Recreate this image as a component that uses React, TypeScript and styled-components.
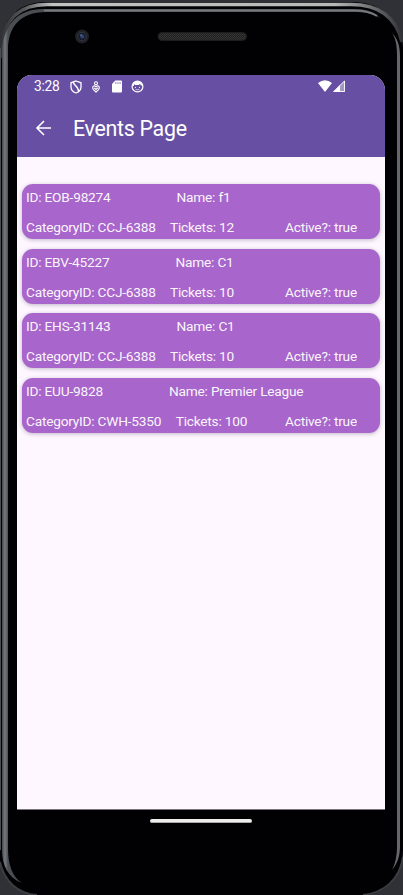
import React from "react";
import styled, { createGlobalStyle } from "styled-components";

const GlobalStyle = createGlobalStyle`
  * { box-sizing: border-box; }
  body { margin: 0; background: #303136; font-family: Roboto, sans-serif; }
`;

const Device = styled.main`
  position: relative;
  display: flex;
  flex-direction: column;
  width: 403px;
  height: 895px;
  padding: 0 18px 0 17px;
  overflow: hidden;
`;

const Shell = styled.svg`
  position: absolute;
  inset: 0;
  z-index: -1;
`;

const TopBezel = styled.div`
  height: 75px;
  flex: none;
`;

const Screen = styled.section`
  display: flex;
  flex-direction: column;
  height: 735px;
  overflow: hidden;
  background: #fef7ff;
  border-radius: 15px 15px 0 0;
  border-bottom: 1px solid #77747a;
`;

const Header = styled.header`
  height: 82px;
  flex: none;
  background: #6750a3;
  color: #fff;
`;

const StatusBar = styled.div`
  display: flex;
  align-items: center;
  justify-content: space-between;
  height: 23px;
  padding: 0 40px 0 17px;
`;

const Notifications = styled.div`
  display: grid;
  grid-template-columns: 36px 22px 20px 19px 13px;
  align-items: center;
`;

const Signals = styled.div`
  display: flex;
  align-items: center;
  gap: 1px;
  padding-bottom: 1px;
`;

const Clock = styled.span`
  font-size: 13.8px;
  line-height: 23px;
  letter-spacing: -0.25px;
  white-space: nowrap;
`;

const AppBar = styled.div`
  display: flex;
  align-items: center;
  height: 61px;
  padding: 0 0 0 18px;
`;

const BackButton = styled.button`
  display: flex;
  width: 18px;
  height: 18px;
  margin: 0 20px 2px 0;
  padding: 0;
  border: 0;
  background: none;
  color: inherit;
`;

const Title = styled.h1`
  margin: 0;
  font-size: 21.4px;
  font-weight: 400;
  line-height: 26px;
  letter-spacing: -0.3px;
`;

const EventList = styled.ul`
  display: flex;
  flex-direction: column;
  gap: 9.7px;
  margin: 0;
  padding: 27px 5px 0;
  list-style: none;
`;

const EventCard = styled.li`
  display: flex;
  flex-direction: column;
  justify-content: space-between;
  height: 55px;
  padding: 5px 4px 3.2px;
  border-radius: 11px;
  background: #a865cb;
  color: #fff;
  box-shadow: 0 1px 4px rgba(60, 40, 80, 0.32);
`;

const CardRow = styled.div<{ $columns: string }>`
  display: grid;
  grid-template-columns: ${(p) => p.$columns};
`;

const Field = styled.span`
  font-size: 13.7px;
  line-height: 17px;
  letter-spacing: -0.22px;
  white-space: nowrap;
  opacity: 0.94;
`;

const HomeIndicator = styled.div`
  width: 102px;
  height: 4px;
  margin: 9px 0 0 133px;
  border-radius: 2px;
  background: #eeedeb;
  border-bottom: 1px solid #aaa;
`;

const events = [
  { id: "EOB-98274", name: "f1", category: "CCJ-6388", tickets: 12, nameAt: 150.5, ticketsAt: 144 },
  { id: "EBV-45227", name: "C1", category: "CCJ-6388", tickets: 10, nameAt: 149.5, ticketsAt: 144 },
  { id: "EHS-31143", name: "C1", category: "CCJ-6388", tickets: 10, nameAt: 150.5, ticketsAt: 144 },
  { id: "EUU-9828", name: "Premier League", category: "CWH-5350", tickets: 100, nameAt: 143, ticketsAt: 149.7 },
];

function DeviceShell() {
  return (
    <Shell width="403" height="895" viewBox="0 0 403 895" fill="none" aria-hidden="true">
      <defs>
        <linearGradient id="rim" x1="0" x2="403" y1="0" y2="0" gradientUnits="userSpaceOnUse">
          <stop offset="0" stopColor="#303236" />
          <stop offset=".06" stopColor="#555759" />
          <stop offset=".13" stopColor="#c2c3c3" />
          <stop offset=".83" stopColor="#b7b8b8" />
          <stop offset=".94" stopColor="#606163" />
          <stop offset="1" stopColor="#303236" />
        </linearGradient>
        <linearGradient id="side" x1="2" x2="8" y1="0" y2="0" gradientUnits="userSpaceOnUse">
          <stop stopColor="#44484c" />
          <stop offset=".5" stopColor="#757a80" />
          <stop offset="1" stopColor="#4a4e53" />
        </linearGradient>
        <pattern id="mesh" width="2" height="2" patternUnits="userSpaceOnUse">
          <rect width="2" height="2" fill="#202020" />
          <rect width="1" height="1" fill="#393939" />
          <rect x="1" y="1" width="1" height="1" fill="#303030" />
        </pattern>
      </defs>
      <path d="M0 50C2 21 15 2 47 2H351C382 2 401 20 403 48V850C401 878 386 895 361 895H39C17 894 3 880 0 860Z" fill="#010103" />
      <path d="M1 58V47C4 22 17 4.5 47 4.5H351C379 4.5 396 17 402 42" stroke="url(#rim)" strokeWidth="3.4" />
      <path d="M.5 48V850" stroke="#4c4d50" />
      <path d="M2 850V48C5 24 18 9 43 9H353C367 9 375 12 380 18C372 13 365 12 353 12H46C20 12 8 27 8 50V848C8 864 12 877 22 883C8 878 2 865 2 850Z" fill="url(#side)" />
      <path d="M44 10.5H353C364 10.5 371 12 377 16" stroke="#77797b" strokeWidth="2" />
      <path d="M392 33C396 39 397 46 397 56V846C397 857 395 864 392 870C398 863 400 855 400 846V56C400 45 397 38 392 33Z" fill="#66676b" />
      <path d="M0 862C4 881 18 894 37 895M403 857C400 880 383 893 363 895" stroke="#3c3d41" strokeWidth="2" />
      <circle cx="82" cy="36.5" r="7" fill="#202022" />
      <circle cx="82" cy="36.5" r="4.3" fill="#161c2c" stroke="#313849" />
      <circle cx="82.3" cy="36.5" r="2" fill="#2f4473" />
      <circle cx="81" cy="35" r=".7" fill="#8792ab" />
      <rect x="158" y="32.5" width="88.5" height="8" rx="4" fill="url(#mesh)" stroke="#1d1d1d" />
    </Shell>
  );
}

function ShieldIcon() {
  return (
    <svg width="12" height="14" viewBox="0 0 12 14" fill="none" stroke="white" strokeWidth="1.3">
      <path d="M6 1L11 2.8V7C11 10 9 12 6 13C3 12 1 10 1 7V2.8Z" />
      <path d="M3.3 2C3 5 9 6.5 8.5 11.5" strokeWidth="1.5" />
    </svg>
  );
}

function CareIcon() {
  return (
    <svg width="8" height="12" viewBox="0 0 8 12" fill="none" stroke="white" strokeWidth="1.1">
      <circle cx="4" cy="2.2" r="1.5" />
      <path d="M4 5.8C2.6 4.1.5 5.2.7 7.1C.9 8.5 2.6 9.7 4 11C5.4 9.7 7.1 8.5 7.3 7.1C7.5 5.2 5.4 4.1 4 5.8ZM2.2 6.8L4 8.5L6 6.6" />
    </svg>
  );
}

function StorageIcon() {
  return (
    <svg width="10" height="13" viewBox="0 0 10 13">
      <path d="M3.3.5H9Q10 .5 10 1.5V11.5Q10 12.5 9 12.5H1Q0 12.5 0 11.5V4Z" fill="white" />
      <path d="M3.8 2V4M6 2V4M8.1 2V4" stroke="#6750a3" strokeWidth=".7" />
    </svg>
  );
}

function FaceIcon() {
  return (
    <svg width="13" height="13" viewBox="0 0 13 13" fill="none">
      <circle cx="6.5" cy="6.5" r="5.4" stroke="white" strokeWidth="1.2" />
      <path d="M1.3 6C1.5 3 3.5 1.2 6.5 1.2S11.5 3 11.7 6L9.7 5.2L9 4L7.5 5H4.2L3.5 4L2.7 6Z" fill="white" />
      <circle cx="4.4" cy="7.3" r=".6" fill="white" />
      <circle cx="8.5" cy="7.3" r=".6" fill="white" />
      <path d="M4.5 9.3Q6.5 10.2 8.5 9.3" stroke="white" strokeWidth=".6" />
    </svg>
  );
}

export default function App() {
  return (
    <>
      <GlobalStyle />
      <Device>
        <DeviceShell />
        <TopBezel />
        <Screen>
          <Header>
            <StatusBar>
              <Notifications>
                <Clock>3:28</Clock>
                <ShieldIcon />
                <CareIcon />
                <StorageIcon />
                <FaceIcon />
              </Notifications>
              <Signals>
                <svg width="14" height="12" viewBox="0 0 14 12">
                  <path d="M0 3Q7-2.5 14 3L7 12Z" fill="white" />
                </svg>
                <svg width="12" height="12" viewBox="0 0 12 12">
                  <path d="M0 12L12 0V12Z" fill="white" fillOpacity=".4" />
                  <path d="M0 12L7 5V12Z" fill="white" />
                  <path d="M1 11.5L11.5 1V11.5Z" fill="none" stroke="white" strokeWidth=".9" />
                </svg>
              </Signals>
            </StatusBar>
            <AppBar>
              <BackButton aria-label="Back">
                <svg width="18" height="18" viewBox="0 0 18 18" fill="none" stroke="white" strokeWidth="1.6">
                  <path d="M16 9H2M9 2L2 9L9 16" />
                </svg>
              </BackButton>
              <Title>Events Page</Title>
            </AppBar>
          </Header>
          <EventList>
            {events.map((event) => (
              <EventCard key={event.id}>
                <CardRow $columns={`${event.nameAt}px 1fr`}>
                  <Field>ID: {event.id}</Field>
                  <Field>Name: {event.name}</Field>
                </CardRow>
                <CardRow $columns={`${event.ticketsAt}px 1fr 91px`}>
                  <Field>CategoryID: {event.category}</Field>
                  <Field>Tickets: {event.tickets}</Field>
                  <Field>Active?: true</Field>
                </CardRow>
              </EventCard>
            ))}
          </EventList>
        </Screen>
        <HomeIndicator />
      </Device>
    </>
  );
}
